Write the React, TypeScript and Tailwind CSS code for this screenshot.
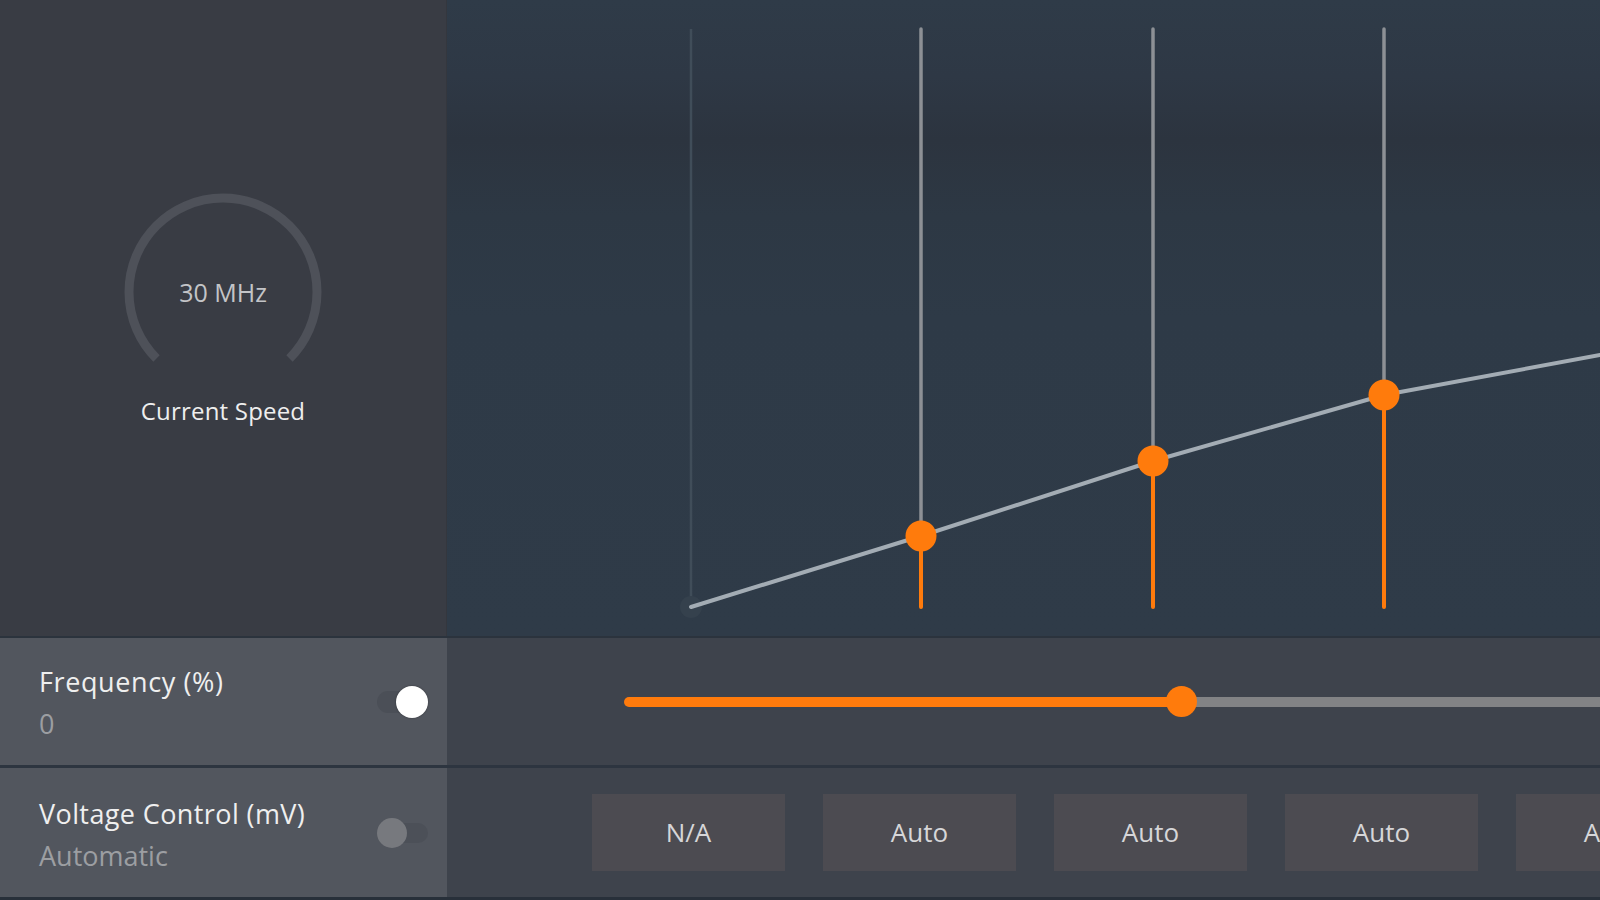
import React from "react";

const ORANGE = "#ff7b0c";

function Gauge() {
  return (
    <div className="flex flex-col items-center pt-[192px]">
      <div className="grid w-[200px] h-[180px]">
        <svg width="200" height="180" viewBox="0 0 200 180" className="[grid-area:1/1]">
          <path
            d="M 33.5 166.5 A 94 94 0 1 1 166.5 166.5"
            fill="none"
            stroke="#4e5159"
            strokeWidth="9"
          />
        </svg>
        <div className="[grid-area:1/1] flex justify-center pt-[85px]">
          <span className="text-[25px] leading-[30px] text-[#c3c4c7]">30 MHz</span>
        </div>
      </div>
      <div className="mt-[26px] text-[24px] tracking-[0.2px] leading-[26px] text-[#eeeeee]">Current Speed</div>
    </div>
  );
}

function Graph() {
  const xs = [244, 474, 706, 937];
  const ys = [607, 536, 461, 395];
  return (
    <svg width="1153" height="636" viewBox="0 0 1153 636" className="block">
      <line x1={244} y1={29} x2={244} y2={607} stroke="#404d59" strokeWidth="2.5" />
      <circle cx={244} cy={607} r={11} fill="#35414d" />
      {xs.slice(1).map((x, i) => (
        <g key={x}>
          <line x1={x} y1={29} x2={x} y2={ys[i + 1]} stroke="#8d9095" strokeWidth="3.5" strokeLinecap="round" />
          <line x1={x} y1={ys[i + 1]} x2={x} y2={607} stroke={ORANGE} strokeWidth="4" strokeLinecap="round" />
        </g>
      ))}
      <polyline
        points="244,607 474,536 706,461 937,395 1153,355"
        fill="none"
        stroke="#a3acb4"
        strokeWidth="4"
        strokeLinecap="round"
        strokeLinejoin="round"
      />
      {xs.slice(1).map((x, i) => (
        <circle key={x} cx={x} cy={ys[i + 1]} r={15.5} fill={ORANGE} />
      ))}
    </svg>
  );
}

function Toggle({ on }: { on: boolean }) {
  return on ? (
    <div className="relative w-[51px] h-[32px] flex items-center">
      <div className="w-[48px] h-[22px] rounded-full bg-[#4b4f57]" />
      <div className="absolute right-0 top-0 w-[32px] h-[32px] rounded-full bg-white shadow-[0_0_2px_rgba(0,0,0,0.4)]" />
    </div>
  ) : (
    <div className="relative w-[51px] h-[30px] flex items-center">
      <div className="w-[51px] h-[20px] rounded-full bg-[#4c5058]" />
      <div className="absolute left-0 top-0 w-[30px] h-[30px] rounded-full bg-[#77797e]" />
    </div>
  );
}

export default function App() {
  return (
    <div className="w-[1600px] h-[900px] overflow-hidden flex flex-col bg-[#2b333d] font-['Open_Sans',sans-serif]">
      <div className="flex h-[636px]">
        <div className="w-[447px] bg-[#393c44] border-r border-[#34373e]">
          <Gauge />
        </div>
        <div className="flex-1 overflow-hidden bg-[linear-gradient(180deg,#2f3b48_0%,#2e3845_12%,#2c343f_22%,#2d3844_34%,#2e3a47_50%,#2f3b48_100%)]">
          <Graph />
        </div>
      </div>
      <div className="h-[2px] bg-[#2b333d]" />
      <div className="flex h-[127px]">
        <div className="w-[447px] bg-[#52565e] flex items-center justify-between pl-[39px] pr-[19px]">
          <div className="flex flex-col pt-[2px]">
            <span className="text-[27px] tracking-[0.6px] leading-[42px] text-[#efefef]">Frequency (%)</span>
            <span className="text-[27px] leading-[42px] text-[#9c9ea2]">0</span>
          </div>
          <Toggle on />
        </div>
        <div className="flex-1 overflow-hidden bg-[#3e434c] flex items-center pl-[177px]">
          <div className="flex items-center shrink-0">
            <div className="w-[557px] h-[10px] rounded-l-full bg-[#ff7b0c]" />
            <div className="w-[31px] h-[31px] rounded-full bg-[#ff7b0c] -mx-[15px] relative" />
            <div className="w-[460px] h-[10px] bg-[#828385]" />
          </div>
        </div>
      </div>
      <div className="h-[3px] bg-[#2d3540]" />
      <div className="flex h-[129px]">
        <div className="w-[447px] bg-[#52565e] flex items-center justify-between pl-[39px] pr-[19px]">
          <div className="flex flex-col pt-[4px]">
            <span className="text-[27px] tracking-[0.4px] leading-[42px] text-[#efefef]">Voltage Control (mV)</span>
            <span className="text-[27px] leading-[42px] text-[#9c9ea2]">Automatic</span>
          </div>
          <Toggle on={false} />
        </div>
        <div className="flex-1 overflow-hidden bg-[#3e434c] flex items-center pl-[145px] gap-[38px]">
          {["N/A", "Auto", "Auto", "Auto", "Auto"].map((t, i) => (
            <div
              key={i}
              className="w-[193px] h-[77px] shrink-0 bg-[#4c4b51] flex items-center justify-center text-[26px] text-[#d6d6d8]"
            >
              {t}
            </div>
          ))}
        </div>
      </div>
      <div className="h-[3px] bg-[#28303a]" />
    </div>
  );
}
